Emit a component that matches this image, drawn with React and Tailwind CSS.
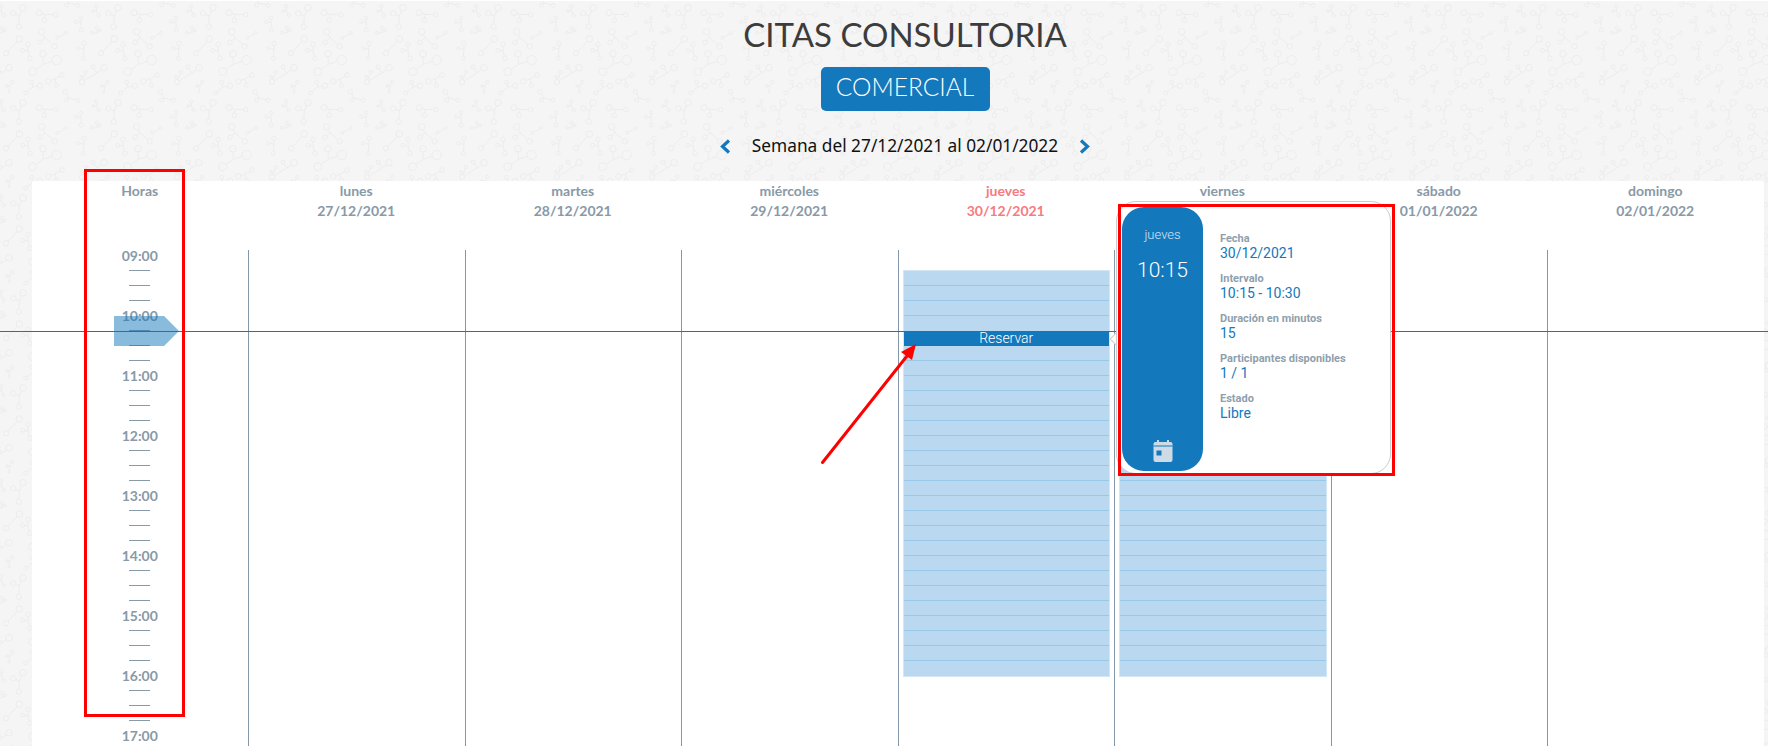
import React from "react";

const dias = [
  { nombre: "lunes", fecha: "27/12/2021" },
  { nombre: "martes", fecha: "28/12/2021" },
  { nombre: "miércoles", fecha: "29/12/2021" },
  { nombre: "jueves", fecha: "30/12/2021", hoy: true, bloque: true },
  { nombre: "viernes", fecha: "31/12/2021", bloque: true },
  { nombre: "sábado", fecha: "01/01/2022" },
  { nombre: "domingo", fecha: "02/01/2022" },
];

const detalles = [
  ["Fecha", "30/12/2021"],
  ["Intervalo", "10:15 - 10:30"],
  ["Duración en minutos", "15"],
  ["Participantes disponibles", "1 / 1"],
  ["Estado", "Libre"],
];

// [x, y, r] de cada círculo; todos unidos a la unión j
const moleculas = [
  { j: [19.3, 15], c: [[23, 6.7, 3.3], [13.3, 12.3, 2.7], [18.7, 25.7, 2.7]] },
  { j: [45, 13.3], c: [[39, 11.7, 3], [55.7, 13.7, 2.3], [44.3, 19.3, 2.3]] },
  { j: [69, 97], c: [[65.3, 90.7, 2.3], [66.7, 99, 2], [78, 99.3, 2]] },
  { j: [1.5, 10], c: [[1.3, 5.3, 1.7], [3.7, 14.3, 1.7], [-2, 10, 1.3]] },
  { j: [81, 21.5], c: [[81, 16.7, 1.7], [76.3, 20.7, 1.7], [81.3, 29, 2]] },
  { j: [2, 32], c: [[1.7, 26.7, 1.7], [-3, 31.7, 1.5], [5, 29.3, 1.3]] },
  { j: [45, 36.7], c: [[41.7, 30.7, 3.3], [40, 41.3, 2.3], [54.7, 45.3, 2.7]] },
  { j: [61, 35], c: [[65.7, 32, 1.5], [57.3, 36.7, 1.5]] },
  { j: [14, 44], c: [[19.3, 38, 3.3], [6, 52.3, 2.7]] },
  { j: [28, 50], c: [[28, 43.3, 2.3], [22.7, 49.3, 2], [30, 57.3, 2.3]] },
  { j: [84, 48], c: [[84, 42.3, 2.3], [78.3, 47.3, 1.7], [83.3, 57.3, 2]] },
  { j: [43.3, 63.3], c: [[43, 52.7, 3.3], [56.7, 59, 4.7], [32.7, 70.7, 4]] },
  { j: [2, 72], c: [[9, 66.7, 3.3], [-2, 66, 2], [-13, 81, 2.7]] },
  { j: [55, 78], c: [[62, 74, 2.3], [48.3, 80.3, 2.7], [56.3, 84.3, 2]] },
  { j: [33, 86], c: [[40, 84.7, 2.7], [31.7, 81.3, 2], [25.7, 92, 2]] },
  { j: [10, 85], c: [[12.3, 81, 1.7], [7, 85, 1.3], [9, 90.7, 1.2]] },
  { j: [84, 76], c: [[85.7, 71, 1.7], [81, 75.7, 1.3], [81.7, 82, 1.7]] },
];

const desplazamientos = [
  [-95, -95], [0, -95], [95, -95],
  [-95, 0], [0, 0], [95, 0],
  [-95, 95], [0, 95], [95, 95],
];

function Fondo() {
  return (
    <svg className="absolute inset-0 h-full w-full" aria-hidden="true">
      <defs>
        <pattern id="moleculas" width="95" height="95" patternUnits="userSpaceOnUse">
          {desplazamientos.map(([dx, dy]) => (
            <g key={`${dx}-${dy}`} transform={`translate(${dx} ${dy})`} fill="none" stroke="#ececec" strokeWidth="1">
              {moleculas.map((m, i) => (
                <g key={i}>
                  {m.c.map(([x, y, r], k) => (
                    <g key={k}>
                      <line x1={m.j[0]} y1={m.j[1]} x2={x} y2={y} />
                      <circle cx={x} cy={y} r={r} fill="#f5f5f5" />
                    </g>
                  ))}
                </g>
              ))}
            </g>
          ))}
        </pattern>
      </defs>
      <rect width="100%" height="100%" fill="url(#moleculas)" />
    </svg>
  );
}

function Chevron({ derecha }) {
  return (
    <svg width="11" height="15" viewBox="0 0 11 15" fill="none" stroke="#1478bc" strokeWidth="3.2">
      <polyline points={derecha ? "2,1.5 8.5,7.5 2,13.5" : "9,1.5 2.5,7.5 9,13.5"} />
    </svg>
  );
}

function BloqueHoras({ activo }) {
  return (
    <div className="mt-[20px] mr-[4px] ml-[4px] border border-[#d3e6f5] bg-[#bad9f0]">
      {Array.from({ length: 27 }).map((_, i) =>
        activo && i === 4 ? (
          <div key={i} className="flex h-[15px] items-center justify-center bg-[#1478bc] font-['Roboto',sans-serif] text-[14px] font-light text-white">
            Reservar
          </div>
        ) : (
          <div key={i} className={`h-[15px] ${i < 26 && !(activo && i === 3) ? "border-b border-[#98c8e8]" : ""}`} />
        )
      )}
    </div>
  );
}

function ColumnaHoras() {
  const filas = [];
  for (let h = 9; h <= 17; h++) {
    filas.push(
      <div key={h} className="flex h-[15px] items-center justify-center">
        {String(h).padStart(2, "0")}:00
      </div>
    );
    if (h < 17) {
      for (let d = 0; d < 3; d++) {
        filas.push(
          <div key={`${h}-${d}`} className="flex h-[15px] items-center justify-center">
            <div className="h-px w-[21px] bg-[#8899a8]" />
          </div>
        );
      }
    }
  }
  return (
    <div className="flex min-w-0 flex-col">
      <div className="h-[67px] leading-[20px]">Horas</div>
      <div>{filas}</div>
    </div>
  );
}

export default function App() {
  return (
    <div className="relative h-screen overflow-hidden border-t border-white bg-[#f5f5f5] font-['Lato',sans-serif]">
      <Fondo />

      <div className="relative flex flex-col items-center pl-[42px]">
        <h1 className="mt-[13px] text-[33px] leading-[40px] font-normal text-[#3c3c3c]">CITAS CONSULTORIA</h1>
        <div className="mt-[13px] flex h-[44px] w-[169px] items-center justify-center rounded-[5px] bg-[#1478bc] pb-[3px] text-[24.5px] font-light text-white">
          COMERCIAL
        </div>
        <div className="mt-[23px] flex h-[24px] items-center gap-[21px]">
          <Chevron />
          <span className="font-['Noto_Sans',sans-serif] text-[17.3px] text-[#111111]">Semana del 27/12/2021 al 02/01/2022</span>
          <Chevron derecha />
        </div>
      </div>

      <div className="relative mt-[23px] mr-[4.5px] ml-[31.5px] grid h-[566px] grid-cols-8 bg-white text-center text-[14px] font-bold text-[#8899a8]">
        <ColumnaHoras />
        {dias.map((d) => (
          <div key={d.nombre} className="flex min-w-0 flex-col">
            <div className={`h-[69px] leading-[20px] ${d.hoy ? "text-[#f77a7f]" : ""}`}>
              <div>{d.nombre}</div>
              <div>{d.fecha}</div>
            </div>
            <div className="flex-1 border-l border-[#8397a8]">
              {d.bloque && <BloqueHoras activo={d.hoy} />}
            </div>
          </div>
        ))}
      </div>

      {/* linea de la hora actual */}
      <div className="absolute top-[330px] right-0 left-0 h-px bg-[#2273ab]" />
      {/* marcador de la hora */}
      <div className="absolute top-[315px] left-[114px] h-[30px] w-[65px] bg-[#1478bc]/50 [clip-path:polygon(0_0,77%_0,100%_50%,77%_100%,0_100%)]" />

      {/* popup de la cita */}
      <div className="absolute top-[332px] left-[1111.5px] h-[12px] w-[12px] rotate-45 border border-[#cccccc] bg-white" />
      <div className="absolute top-[200px] left-[1116px] flex h-[273px] w-[275px] rounded-[20px] border border-[#cccccc] bg-white px-[5px] pt-[5px] pb-[2px]">
        <div className="flex w-[81px] flex-col items-center rounded-[22px] bg-[#1478bc] font-['Roboto',sans-serif] text-white">
          <div className="mt-[20px] text-[13px] font-light leading-[16px] text-white/80">jueves</div>
          <div className="mt-[14px] text-[21px] leading-[26px] font-light">10:15</div>
          <svg className="mt-auto mb-[9px]" width="20" height="22" viewBox="0 0 20 22" fill="#ccdbe6">
            <rect x="4" y="0" width="2" height="4" />
            <rect x="14" y="0" width="2" height="4" />
            <rect x="0.5" y="2" width="19" height="20" rx="2" />
            <rect x="0.5" y="5.5" width="19" height="1" fill="#1478bc" />
            <rect x="3.5" y="10.5" width="5" height="5" fill="#1478bc" />
          </svg>
        </div>
        <div className="mt-[25px] ml-[17px] flex flex-col gap-[10px] font-['Roboto',sans-serif]">
          {detalles.map(([etiqueta, valor]) => (
            <div key={etiqueta} className="flex h-[30px] flex-col">
              <div className="text-[11px] font-bold leading-[13px] text-[#8f9fad]">{etiqueta}</div>
              <div className="text-[14px] leading-[16px] text-[#1478bc]">{valor}</div>
            </div>
          ))}
        </div>
      </div>

      {/* anotaciones en rojo */}
      <div className="absolute top-[168px] left-[84px] h-[548px] w-[101px] border-[3px] border-[#ff0000]" />
      <div className="absolute top-[203px] left-[1118px] h-[272px] w-[277px] border-[3px] border-[#ff0000]" />
      <svg className="absolute top-[335px] left-[815px]" width="110" height="135" viewBox="0 0 110 135" fill="none">
        <line x1="7.5" y1="126.5" x2="92" y2="20" stroke="#ff0000" strokeWidth="3" strokeLinecap="round" />
        <polygon points="101,8 86,16 97,24" fill="#ff0000" />
      </svg>
    </div>
  );
}
